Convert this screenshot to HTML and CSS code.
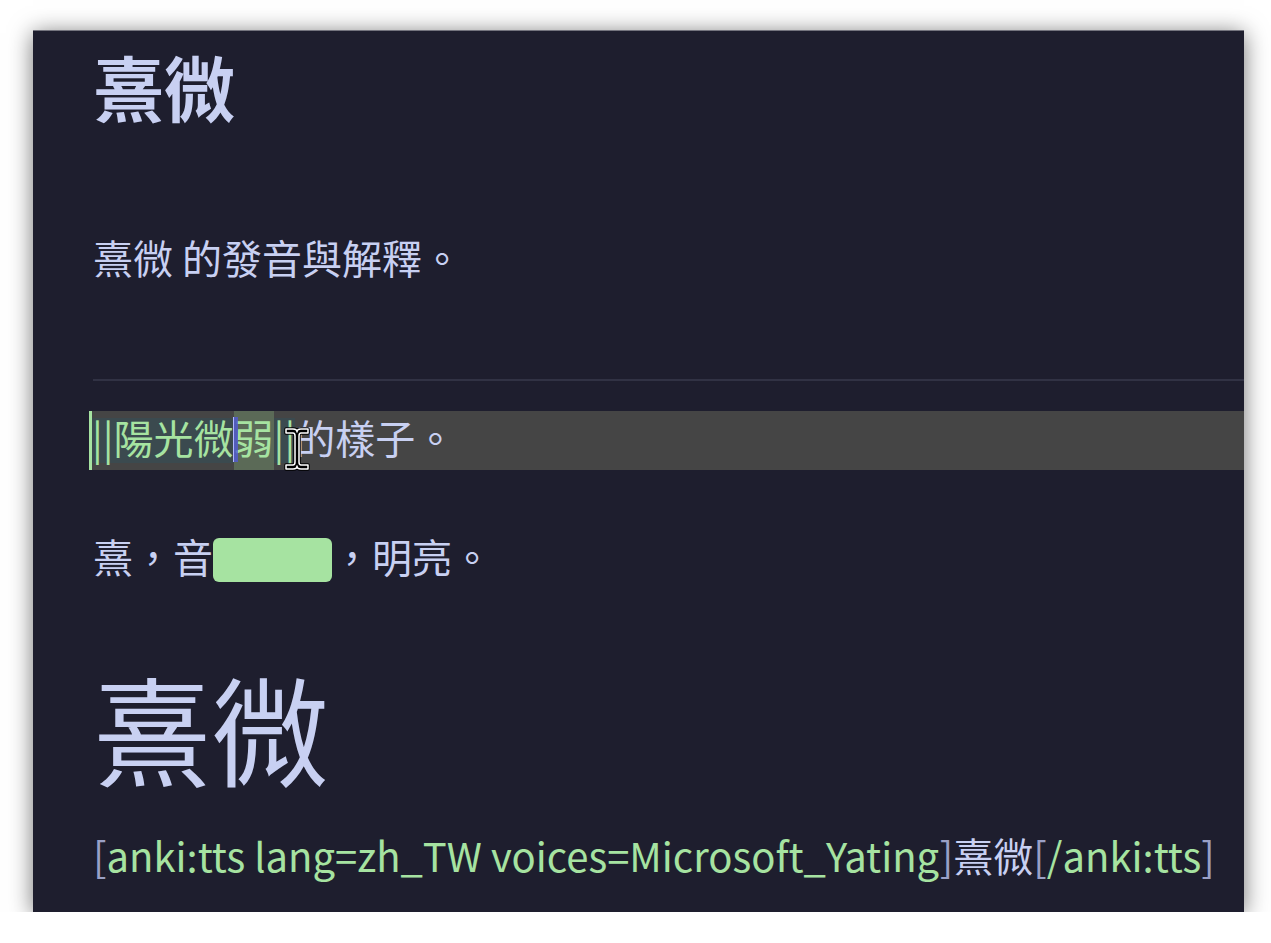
FILE: index.html
```html
<!DOCTYPE html>
<html lang="zh-Hant">
<head>
<meta charset="utf-8">
<title>熹微</title>
<link rel="stylesheet" href="styles.css">
</head>
<body>
<div class="panel">
  <div class="content">
    <h1 class="title">熹微</h1>
    <p class="line desc">熹微 的發音與解釋。</p>
    <hr class="rule">
    <div class="edit-row">
      <span class="mk">||陽光微</span><span class="sel">弱</span><span class="mk">||</span><span class="rest">的樣子。</span>
      <svg class="ibeam" width="26" height="44" viewBox="0 0 26 44">
        <path d="M2,2 H9 Q13,2 13,5 Q13,2 17,2 H24 V6 H17 Q15,6 15,9 V35 Q15,38 17,38 H24 V42 H17 Q13,42 13,39 Q13,42 9,42 H2 V38 H9 Q11,38 11,35 V9 Q11,6 9,6 H2 Z" fill="#000" stroke="#000" stroke-width="3.5" stroke-linejoin="round"/>
        <path d="M2,2 H9 Q13,2 13,5 Q13,2 17,2 H24 V6 H17 Q15,6 15,9 V35 Q15,38 17,38 H24 V42 H17 Q13,42 13,39 Q13,42 9,42 H2 V38 H9 Q11,38 11,35 V9 Q11,6 9,6 H2 Z" fill="#000" stroke="#fff" stroke-width="1.5" stroke-linejoin="round"/>
      </svg>
    </div>
    <p class="line cloze-line">熹，音<span class="cloze"></span>，明亮。</p>
    <div class="big">熹微</div>
    <p class="line tts"><span class="br">[</span><span class="tag">anki:tts lang=zh_TW voices=Microsoft_Yating</span><span class="br">]</span>熹微<span class="br">[</span><span class="tag">/anki:tts</span><span class="br">]</span></p>
  </div>
</div>
</body>
</html>
```
FILE: styles.css
```css
html, body {
  margin: 0;
  padding: 0;
  background: #ffffff;
}
body {
  font-family: "Noto Sans CJK TC", "Noto Sans", sans-serif;
  color: #c8d0f2;
}
.panel {
  margin: 30px 0 0 33px;
  width: 1211px;
  height: 882px;
  box-sizing: border-box;
  background: #1e1e2e;
  border-top: 1px solid #74747e;
  box-shadow: 0 3px 22px rgba(0, 0, 0, 0.55);
  overflow: hidden;
}
.content {
  padding-left: 60px;
}
.title {
  margin: 4px 0 0;
  font-size: 71px;
  font-weight: 700;
  line-height: 100px;
}
.line {
  margin: 0;
  font-size: 40px;
  line-height: 50px;
  white-space: nowrap;
}
.desc {
  margin-top: 97px;
}
.rule {
  margin: 97px 0 0;
  border: 0;
  height: 2px;
  background: #313244;
}
.edit-row {
  position: relative;
  margin: 30px 0 0 -4px;
  height: 59px;
  display: flex;
  align-items: center;
  background: #454545;
  border-left: 3px solid #a6e3a1;
  font-size: 40px;
  white-space: nowrap;
}
.mk {
  box-sizing: border-box;
  height: 45px;
  line-height: 39px;
  padding-bottom: 6px;
  background: #3b4a4f;
  color: #a6e3a1;
}
.sel {
  position: relative;
  align-self: stretch;
  line-height: 39px;
  padding-top: 7px;
  background: #5b6a57;
  color: #a6e3a1;
}
.sel::before {
  content: "";
  position: absolute;
  left: -1px;
  top: 6px;
  width: 5px;
  height: 45px;
  background: rgba(80, 90, 220, 0.75);
  border-left: 1px solid #b0b8ff;
  box-sizing: border-box;
}
.rest {
  box-sizing: border-box;
  height: 45px;
  line-height: 39px;
  padding-bottom: 6px;
}
.ibeam {
  position: absolute;
  left: 192px;
  top: 16px;
}
.cloze-line {
  margin-top: 61px;
}
.cloze {
  display: inline-block;
  width: 119px;
  height: 44px;
  vertical-align: -9px;
  background: #a6e3a1;
  border-radius: 6px;
}
.big {
  margin-top: 75px;
  font-size: 118px;
  line-height: 140px;
}
.tts {
  margin-top: 33px;
}
.tag {
  color: #a6e3a1;
}
.br {
  color: #9aa0c6;
}
```
